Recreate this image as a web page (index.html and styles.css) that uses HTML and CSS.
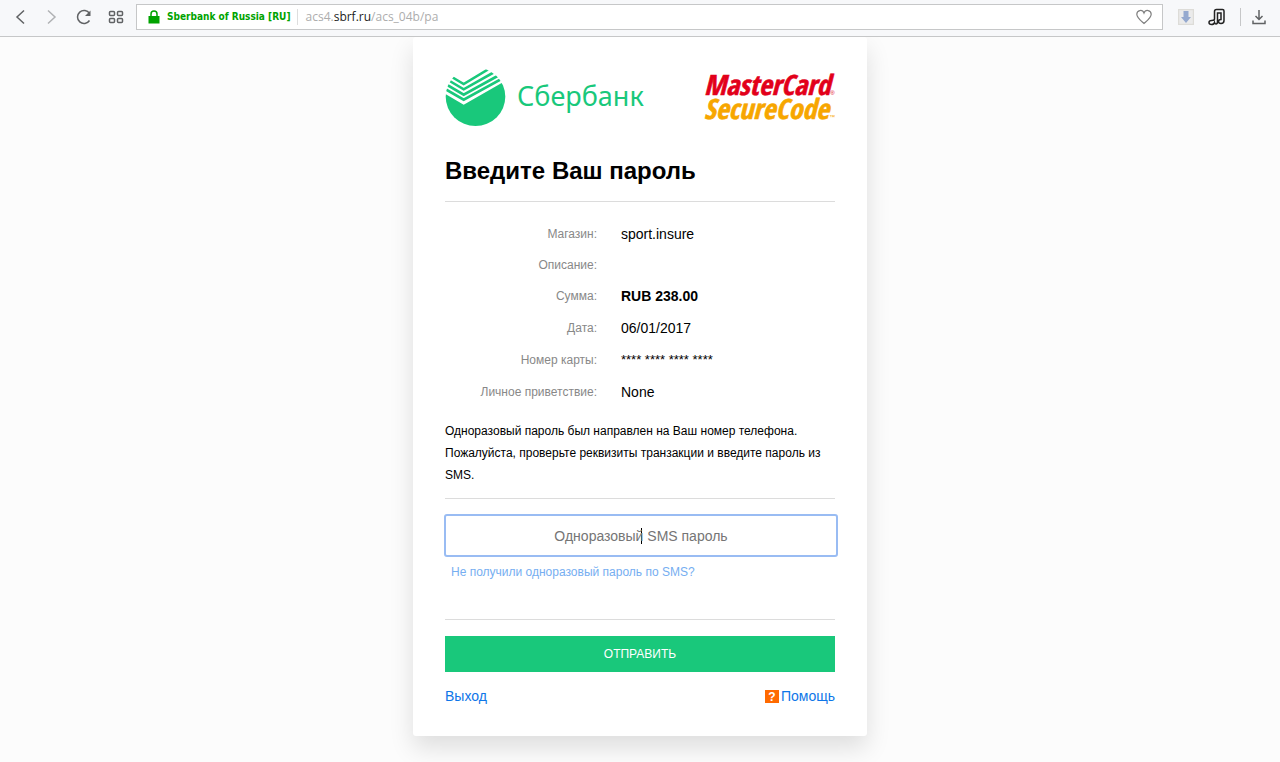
FILE: index.html
```html
<!DOCTYPE html>
<html lang="ru">
<head>
  <meta charset="utf-8">
  <title>Введите Ваш пароль</title>
  <link rel="stylesheet" href="styles.css">
</head>
<body>
  <header class="toolbar">
    <nav class="nav-buttons">
      <button type="button" class="icon-btn" aria-label="Back">
        <svg width="16" height="16" viewBox="0 0 16 16"><path d="M12 1.500L5 8l7 6.500"/></svg>
      </button>
      <button type="button" class="icon-btn muted" aria-label="Forward">
        <svg width="16" height="16" viewBox="0 0 16 16"><path d="M4 1.500L11 8L4 14.500"/></svg>
      </button>
      <button type="button" class="icon-btn" aria-label="Reload">
        <svg width="16" height="16" viewBox="0 0 16 16"><path d="M13.500 4.500A6.500 6.500 0 1 0 13.500 11.500"/><path class="solid" d="M14.500 1.500v5.500H9z"/></svg>
      </button>
      <button type="button" class="icon-btn" aria-label="Speed dial">
        <svg width="16" height="16" viewBox="0 0 16 16"><rect x="1.500" y="2.500" width="5" height="4" rx="1"/><rect x="9.500" y="2.500" width="5" height="4" rx="1"/><rect x="1.500" y="9.500" width="5" height="4" rx="1"/><rect x="9.500" y="9.500" width="5" height="4" rx="1"/></svg>
      </button>
    </nav>

    <div class="address-bar">
      <svg class="lock" width="12" height="14" viewBox="0 0 12 14"><path d="M3 7V4a3 3 0 0 1 6 0v3" fill="none" stroke="#00a300" stroke-width="1.500"/><rect x="0.500" y="6" width="11" height="7.500" fill="#00a300"/></svg>
      <span class="cert">Sberbank of Russia [RU]</span>
      <span class="url">acs4.<b>sbrf.ru</b>/acs_04b/pa</span>
      <button type="button" class="icon-btn heart" aria-label="Bookmark">
        <svg width="18" height="16" viewBox="0 0 18 16"><path d="M9 14.500C5.500 11.500 1.800 8.800 1.800 5.300C1.800 1 7.500 0 9 4C10.500 0 16.200 1 16.200 5.300C16.200 8.800 12.500 11.500 9 14.500z"/></svg>
      </button>
    </div>

    <div class="extensions">
      <button type="button" class="icon-btn" aria-label="Save file">
        <svg width="16" height="16" viewBox="0 0 16 16"><rect x="0.500" y="0.500" width="15" height="15" fill="#ebebeb" stroke="#dddcd8"/><path d="M5.500 2h5v6H13l-5 6-5-6h2.500z" fill="#95a9cf" stroke="none"/></svg>
      </button>
      <button type="button" class="icon-btn" aria-label="Music">
        <svg width="18" height="18" viewBox="0 0 18 18" class="music"><path d="M6.500 11V3.500Q6.500 1.500 8.500 1.500H14.500Q16 1.500 16 3V12.500Q16 15.500 13 15.500Q10.500 15.500 10.500 13.500Q10.500 11.500 13 11.500V5H9.500V13.500Q9.500 16 8 16Q7 16 6.500 14.500Q6 16.500 3.500 16.500Q1 16.500 1 14.500Q1 12.500 3.500 12.500Q6.500 12.500 6.500 11z"/></svg>
      </button>
      <button type="button" class="icon-btn downloads" aria-label="Downloads">
        <svg width="14" height="16" viewBox="0 0 14 16"><path d="M7 1v9M3.500 7L7 10.500 10.500 7M1 11.500V14.500H13V11.500"/></svg>
      </button>
    </div>
  </header>

  <main class="card">
    <div class="logos">
      <div class="bank">
        <svg width="61" height="58" viewBox="0 0 61 58">
          <defs><clipPath id="disc"><ellipse cx="30.500" cy="28.700" rx="29.800" ry="29.300"/></clipPath></defs>
          <g clip-path="url(#disc)">
            <path d="M0 25.800L18.700 36.700L61 12.500V58H0z" fill="#19c87b"/>
            <g fill="none" stroke="#19c87b" stroke-width="2.600">
              <path d="M6 8.500L18.700 16L45.500 0"/>
              <path d="M3 12L18.700 21.300L53 2"/>
              <path d="M0 15.700L18.700 26.700L58 5"/>
              <path d="M0 21L18.700 31.700L61 8.500"/>
            </g>
          </g>
        </svg>
        <span class="bank-name">Сбербанк</span>
      </div>
      <div class="secure-code">
        <span class="mc">MasterCard<small>®</small></span>
        <span class="sc">SecureCode<small>™</small></span>
      </div>
    </div>

    <h1>Введите Ваш пароль</h1>

    <dl class="details">
      <div class="row"><dt>Магазин:</dt><dd>sport.insure</dd></div>
      <div class="row"><dt>Описание:</dt><dd></dd></div>
      <div class="row"><dt>Сумма:</dt><dd><strong>RUB 238.00</strong></dd></div>
      <div class="row"><dt>Дата:</dt><dd>06/01/2017</dd></div>
      <div class="row"><dt>Номер карты:</dt><dd class="masked">**** **** **** ****</dd></div>
      <div class="row"><dt>Личное приветствие:</dt><dd>None</dd></div>
    </dl>

    <p class="hint">Одноразовый пароль был направлен на Ваш номер телефона. Пожалуйста, проверьте реквизиты транзакции и введите пароль из SMS.</p>

    <form class="form">
      <div class="field">
        <input type="text" class="password" placeholder="Одноразовый SMS пароль" aria-label="Одноразовый SMS пароль">
        <a href="#" class="resend">Не получили одноразовый пароль по SMS?</a>
      </div>
      <button type="submit" class="submit">ОТПРАВИТЬ</button>
    </form>

    <footer class="links">
      <a href="#">Выход</a>
      <a href="#" class="help"><span class="help-icon">?</span>Помощь</a>
    </footer>
  </main>
</body>
</html>
```

FILE: styles.css
```css
* {
  margin: 0;
  padding: 0;
  box-sizing: border-box;
}

body {
  min-height: 100vh;
  font-family: "Liberation Sans", Arial, sans-serif;
  font-size: 14px;
  line-height: 20px;
  color: #000;
  background: #fcfcfc;
}

a {
  color: #0e76e8;
  text-decoration: none;
}

/* browser toolbar */
.toolbar {
  position: relative;
  display: flex;
  align-items: center;
  height: 37px;
  padding: 0 14px 3px 12px;
  background: #f7f8fa;
  border-bottom: 1px solid #c6c7c8;
}

.nav-buttons {
  display: flex;
  gap: 16px;
  margin-right: 12px;
}

.icon-btn {
  display: flex;
  background: none;
  border: none;
}

.icon-btn svg {
  fill: none;
  stroke: #606264;
  stroke-width: 1.5;
}

.icon-btn .solid {
  fill: #606264;
  stroke: none;
}

.icon-btn.muted svg {
  stroke: #b0b2b4;
}

.address-bar {
  flex: 1;
  display: flex;
  align-items: center;
  height: 26px;
  padding: 0 9px 0 11px;
  background: #fff;
  border: 1px solid #c6c7c8;
}

.cert {
  margin-left: 7px;
  padding-right: 6px;
  font: bold 10px/16px "DejaVu Sans Condensed", "DejaVu Sans", sans-serif;
  color: #00a300;
  border-right: 1px solid #dedede;
}

.url {
  flex: 1;
  margin-left: 8px;
  font: 12px/16px "Open Sans", sans-serif;
  color: #adadad;
}

.url b {
  font-weight: normal;
  color: #222;
}

.icon-btn.heart svg {
  stroke: #808080;
  stroke-width: 1.2;
}

.extensions {
  display: flex;
  align-items: center;
  gap: 14px;
  margin-left: 15px;
}

.icon-btn .music {
  stroke: #222;
}

.downloads {
  padding: 1px 0 1px 11px;
  border-left: 1px solid #c6c7c8;
}

/* payment card */
.card {
  width: 454px;
  margin: 0 auto;
  padding: 31px 32px 30px;
  background: #fff;
  border-radius: 3px;
  box-shadow: 0 12px 24px rgba(0, 0, 0, 0.12);
}

.logos {
  display: flex;
  justify-content: space-between;
  height: 58px;
}

.bank {
  display: flex;
  align-items: center;
  gap: 11px;
}

.bank-name {
  padding-bottom: 2px;
  font: 27px/32px "Noto Sans", sans-serif;
  color: #19c87b;
}

.secure-code {
  display: flex;
  flex-direction: column;
  padding-top: 4px;
  font: italic bold 28px/24px "Liberation Sans Narrow", "Open Sans Condensed", "Open Sans", sans-serif;
  -webkit-text-stroke: 0.6px currentColor;
}

.secure-code small {
  font: 6px/6px "Liberation Sans", sans-serif;
  -webkit-text-stroke: 0;
}

.mc {
  color: #e2001a;
}

.sc {
  color: #f7a600;
}

h1 {
  margin-top: 29px;
  padding-bottom: 14px;
  font-size: 24px;
  line-height: 32px;
  border-bottom: 1px solid #dcdcdc;
}

.details {
  padding-top: 16px;
}

.row {
  display: flex;
  align-items: center;
  gap: 24px;
  padding: 6px 0;
}

dt {
  width: 152px;
  font-size: 12px;
  line-height: 18px;
  text-align: right;
  color: #888;
}

.masked {
  font-size: 13px;
}

.hint {
  margin-top: 12px;
  padding-bottom: 12px;
  font-size: 12px;
  line-height: 22px;
  border-bottom: 1px solid #dcdcdc;
}

.field {
  padding: 15px 0 37px;
  border-bottom: 1px solid #dcdcdc;
}

/* focused look, caret drawn in the middle of the empty box */
.password {
  display: block;
  width: calc(100% + 4px);
  height: 43px;
  margin-left: -1px;
  font: 14px/20px "Liberation Sans", Arial, sans-serif;
  text-align: center;
  background: linear-gradient(#000, #000) center / 1px 16px no-repeat #fff;
  border: 2px solid #99bcf3;
  border-radius: 3px;
  outline: none;
}

.password::placeholder {
  color: #757575;
}

.resend {
  display: block;
  padding: 5px 6px 0;
  font-size: 12px;
  line-height: 20px;
  color: #76aef1;
}

.submit {
  display: block;
  width: 100%;
  height: 36px;
  margin-top: 16px;
  font: 12px/20px "Liberation Sans", Arial, sans-serif;
  color: #fff;
  background: #19c87b;
  border: none;
}

.links {
  display: flex;
  justify-content: space-between;
  margin-top: 14px;
}

.help {
  display: flex;
  align-items: center;
  gap: 2px;
}

.help-icon {
  width: 14px;
  height: 13px;
  font-size: 12px;
  font-weight: bold;
  line-height: 14px;
  text-align: center;
  color: #fff;
  background: #ff6a00;
}
```
